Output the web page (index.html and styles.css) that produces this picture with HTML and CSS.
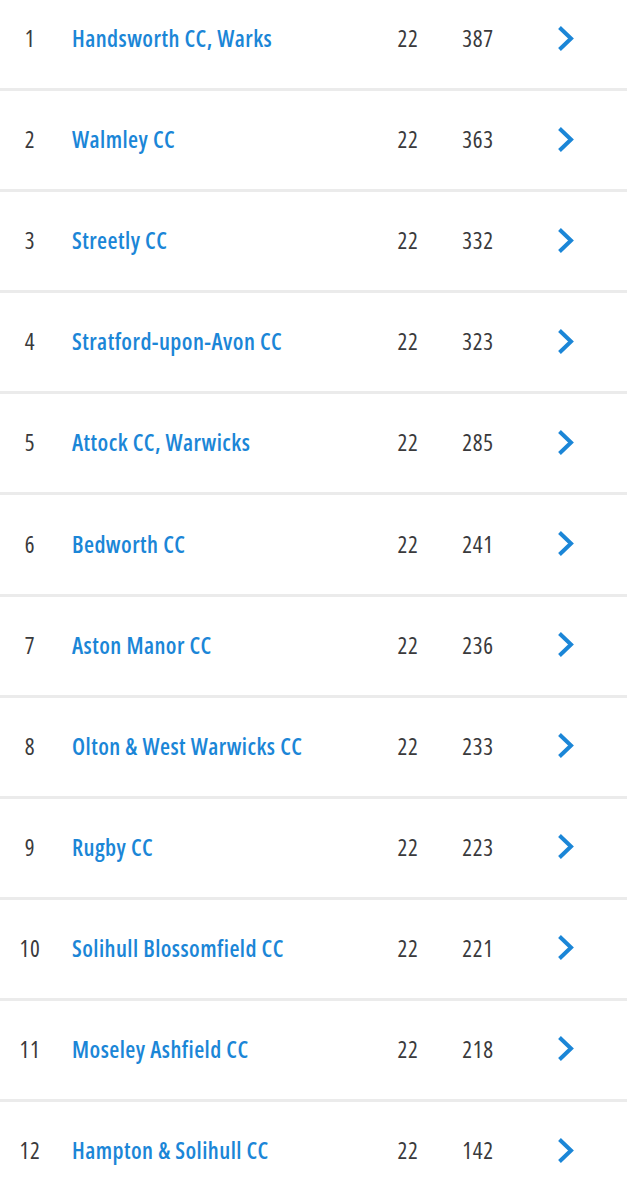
FILE: index.html
```html
<!DOCTYPE html>
<html lang="en">
<head>
<meta charset="utf-8">
<title>League table</title>
<link rel="stylesheet" href="styles.css">
</head>
<body>
<ul class="table">
  <li class="row"><span class="rank">1</span><a class="team" href="#">Handsworth CC, Warks</a><span class="played">22</span><span class="points">387</span><span class="go"><svg viewBox="0 0 17 27" width="17" height="27"><path d="M2.5 2.5 L14 13.5 L2.5 24.5"/></svg></span></li>
  <li class="row"><span class="rank">2</span><a class="team" href="#">Walmley CC</a><span class="played">22</span><span class="points">363</span><span class="go"><svg viewBox="0 0 17 27" width="17" height="27"><path d="M2.5 2.5 L14 13.5 L2.5 24.5"/></svg></span></li>
  <li class="row"><span class="rank">3</span><a class="team" href="#">Streetly CC</a><span class="played">22</span><span class="points">332</span><span class="go"><svg viewBox="0 0 17 27" width="17" height="27"><path d="M2.5 2.5 L14 13.5 L2.5 24.5"/></svg></span></li>
  <li class="row"><span class="rank">4</span><a class="team" href="#">Stratford-upon-Avon CC</a><span class="played">22</span><span class="points">323</span><span class="go"><svg viewBox="0 0 17 27" width="17" height="27"><path d="M2.5 2.5 L14 13.5 L2.5 24.5"/></svg></span></li>
  <li class="row"><span class="rank">5</span><a class="team" href="#">Attock CC, Warwicks</a><span class="played">22</span><span class="points">285</span><span class="go"><svg viewBox="0 0 17 27" width="17" height="27"><path d="M2.5 2.5 L14 13.5 L2.5 24.5"/></svg></span></li>
  <li class="row"><span class="rank">6</span><a class="team" href="#">Bedworth CC</a><span class="played">22</span><span class="points">241</span><span class="go"><svg viewBox="0 0 17 27" width="17" height="27"><path d="M2.5 2.5 L14 13.5 L2.5 24.5"/></svg></span></li>
  <li class="row"><span class="rank">7</span><a class="team" href="#">Aston Manor CC</a><span class="played">22</span><span class="points">236</span><span class="go"><svg viewBox="0 0 17 27" width="17" height="27"><path d="M2.5 2.5 L14 13.5 L2.5 24.5"/></svg></span></li>
  <li class="row"><span class="rank">8</span><a class="team" href="#">Olton &amp; West Warwicks CC</a><span class="played">22</span><span class="points">233</span><span class="go"><svg viewBox="0 0 17 27" width="17" height="27"><path d="M2.5 2.5 L14 13.5 L2.5 24.5"/></svg></span></li>
  <li class="row"><span class="rank">9</span><a class="team" href="#">Rugby CC</a><span class="played">22</span><span class="points">223</span><span class="go"><svg viewBox="0 0 17 27" width="17" height="27"><path d="M2.5 2.5 L14 13.5 L2.5 24.5"/></svg></span></li>
  <li class="row"><span class="rank">10</span><a class="team" href="#">Solihull Blossomfield CC</a><span class="played">22</span><span class="points">221</span><span class="go"><svg viewBox="0 0 17 27" width="17" height="27"><path d="M2.5 2.5 L14 13.5 L2.5 24.5"/></svg></span></li>
  <li class="row"><span class="rank">11</span><a class="team" href="#">Moseley Ashfield CC</a><span class="played">22</span><span class="points">218</span><span class="go"><svg viewBox="0 0 17 27" width="17" height="27"><path d="M2.5 2.5 L14 13.5 L2.5 24.5"/></svg></span></li>
  <li class="row"><span class="rank">12</span><a class="team" href="#">Hampton &amp; Solihull CC</a><span class="played">22</span><span class="points">142</span><span class="go"><svg viewBox="0 0 17 27" width="17" height="27"><path d="M2.5 2.5 L14 13.5 L2.5 24.5"/></svg></span></li>
</ul>
</body>
</html>
```
FILE: styles.css
```css
html, body {
  margin: 0;
  padding: 0;
  background: #ffffff;
}
body {
  font-family: "Open Sans", "Noto Sans", sans-serif;
  font-stretch: 75%;
  overflow: hidden;
}
.table {
  list-style: none;
  margin: -10px 0 0 0;
  padding: 0;
}
.row {
  display: grid;
  grid-template-columns: 60px 1fr 60px 80px 109px;
  align-items: center;
  box-sizing: border-box;
  height: 101.1px;
  padding-bottom: 2px;
  border-bottom: 3px solid #ebebeb;
}
.rank, .played, .points {
  color: #3a3a3c;
  font-size: 23px;
  font-weight: 400;
  letter-spacing: 0.8px;
  text-align: center;
}
.team {
  padding-left: 12px;
  color: #1b86d7;
  font-size: 23px;
  font-weight: 600;
  letter-spacing: 0.45px;
  text-decoration: none;
  white-space: nowrap;
}
.go {
  display: flex;
  padding-left: 39px;
}
.go svg {
  fill: none;
  stroke: #1b86d7;
  stroke-width: 4;
}
```
